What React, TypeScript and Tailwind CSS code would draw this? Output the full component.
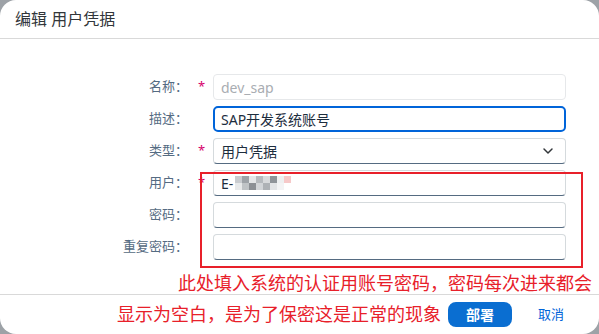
import { ChevronDown } from "lucide-react"

const font = { fontFamily: '"Noto Sans", "Noto Sans CJK SC", sans-serif' }

const blur = [
  ["#c9ccd0", "#9ea3a8", "#e4e6e8", "#b6babe", "#d8dadc", "#8f9499", "#eef0f1", "#f6c9c9", "#ffffff"],
  ["#e7e9ea", "#bfc3c6", "#8c9095", "#d2d5d8", "#aeb2b6", "#e2e4e6", "#f3f4f5", "#ffffff", "#ffffff"],
]

function Star() {
  return <span className="text-[13px] leading-none text-[#d6006b]">*</span>
}

export default function App() {
  return (
    <div className="h-[334px] w-[599px] bg-[#9da2a7]" style={font}>
      <div className="relative flex h-full flex-col overflow-hidden rounded-2xl bg-white">
        <div className="flex h-[39px] items-center border-b border-[#d9d9d9] px-[15px] text-[16px] text-[#32363a]">
          编辑 用户凭据
        </div>

        <div className="flex-1 pt-[35px]">
          <div className="grid grid-cols-[190px_23px_353px] items-center gap-y-[6px] text-[13px]">
            <div className="pr-[2px] text-right text-[#556b82]">名称：</div>
            <div className="flex justify-center self-start pt-[6px]"><Star /></div>
            <div className="flex h-[26px] items-center rounded-[4px] border border-[#e6e8ea] px-[7px] text-[14px] text-[#a9adb2]">
              dev_sap
            </div>

            <div className="pr-[2px] text-right text-[#556b82]">描述：</div>
            <div />
            <div className="flex h-[26px] items-center rounded-[5px] border-2 border-[#0064d9] px-[6px] text-[14px] text-[#1d2d3e]">
              SAP开发系统账号
            </div>

            <div className="pr-[2px] text-right text-[#556b82]">类型：</div>
            <div className="flex justify-center self-start pt-[6px]"><Star /></div>
            <div className="flex h-[26px] items-center justify-between rounded-[4px] border border-[#d5dadd] border-b-[#556b81] px-[7px] text-[14px] text-[#1d2d3e]">
              <span>用户凭据</span>
              <ChevronDown size={16} strokeWidth={2.2} className="mr-[2px] text-[#32363a]" />
            </div>

            <div className="pr-[2px] text-right text-[#556b82]">用户：</div>
            <div className="flex justify-center self-start pt-[6px]"><Star /></div>
            <div className="flex h-[26px] items-center rounded-[4px] border border-[#d5dadd] border-b-[#556b81] px-[7px] text-[14px] text-[#1d2d3e]">
              <span>E-</span>
              <div className="ml-[2px] flex flex-col">
                {blur.map((row, i) => (
                  <div key={i} className="flex">
                    {row.map((c, j) => (
                      <div key={j} className="h-[7px] w-[7px]" style={{ backgroundColor: c }} />
                    ))}
                  </div>
                ))}
              </div>
            </div>

            <div className="pr-[2px] text-right text-[#556b82]">密码：</div>
            <div />
            <div className="h-[26px] rounded-[4px] border border-[#d5dadd] border-b-[#556b81]" />

            <div className="pr-[2px] text-right text-[#556b82]">重复密码：</div>
            <div />
            <div className="h-[26px] rounded-[4px] border border-[#d5dadd] border-b-[#556b81]" />
          </div>
        </div>

        <div className="flex h-[40px] items-center justify-end border-t border-[#d9d9d9] pr-[35px]">
          <button className="h-[25px] w-[64px] rounded-lg bg-[#0a6ed1] text-[14px] font-bold text-white">
            部署
          </button>
          <button className="ml-[26px] text-[13px] text-[#0064d9]">取消</button>
        </div>

        {/* red annotation */}
        <div className="absolute left-[200px] top-[172px] h-[96px] w-[383px] border-2 border-[#e8202a]" />
        <div className="absolute left-[178px] top-[272px] text-[18px] leading-[22px] text-[#e8202a]">
          此处填入系统的认证用账号密码，密码每次进来都会
        </div>
        <div className="absolute left-[117px] top-[303px] text-[18px] leading-[22px] text-[#e8202a]">
          显示为空白，是为了保密这是正常的现象
        </div>
      </div>
    </div>
  )
}
